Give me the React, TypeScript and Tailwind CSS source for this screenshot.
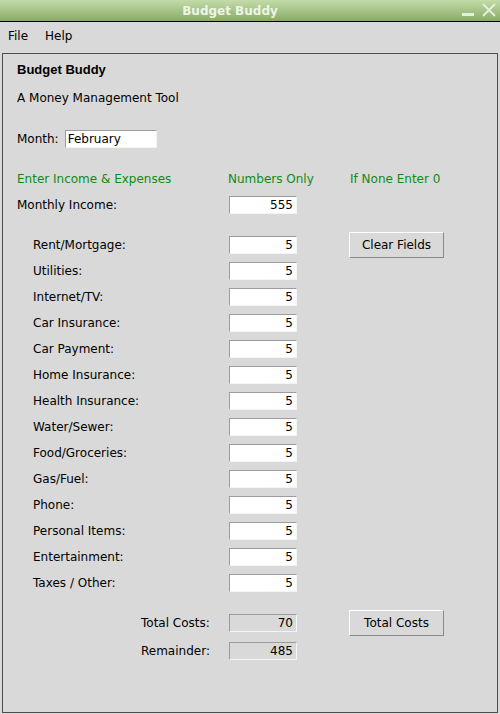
import React from "react";

const body = { fontFamily: '"DejaVu Sans", sans-serif' };

function Entry({ value, readOnly = false, w = "w-[68px]", align = "text-right" }: { value: string; readOnly?: boolean; w?: string; align?: string }) {
  return (
    <div
      className={`${w} h-[18px] border-t border-l border-[#9c9c9c] border-b border-r border-b-[#f4f4f4] border-r-[#f4f4f4] ${readOnly ? "bg-[#d9d9d9]" : "bg-white"} flex items-center ${align === "text-right" ? "justify-end pr-[3px]" : "justify-start pl-[2px]"} text-[12px] text-black leading-none`}
    >
      {value}
    </div>
  );
}

function Button({ label }: { label: string }) {
  return (
    <div className="w-[95px] h-[26px] border border-t-white border-l-white border-b-[#8a8a8a] border-r-[#8a8a8a] bg-[#d9d9d9] flex items-center justify-center text-[12px] text-black">
      {label}
    </div>
  );
}

const expenses = [
  "Rent/Mortgage:",
  "Utilities:",
  "Internet/TV:",
  "Car Insurance:",
  "Car Payment:",
  "Home Insurance:",
  "Health Insurance:",
  "Water/Sewer:",
  "Food/Groceries:",
  "Gas/Fuel:",
  "Phone:",
  "Personal Items:",
  "Entertainment:",
  "Taxes / Other:",
];

export default function App() {
  return (
    <div className="w-[500px] h-[714px] bg-[#d9d9d9] flex flex-col overflow-hidden" style={body}>
      {/* Title bar */}
      <div className="h-[22px] border-b border-black bg-gradient-to-b from-[#c4dca8] to-[#88ab68] flex items-center relative shrink-0">
        <div
          className="w-full pr-[40px] text-center text-[12px] font-bold text-[#eef5e6] leading-none"
          style={{ fontFamily: '"DejaVu Sans", sans-serif' }}
        >
          Budget Buddy
        </div>
        <div className="absolute right-[4px] top-[3px] flex items-end gap-[8px]">
          <div className="w-[12px] h-[3px] bg-[#e6efdc] mb-[1px]" />
          <svg width="14" height="14" viewBox="0 0 14 14">
            <path d="M1 1 L13 13 M13 1 L1 13" stroke="#e6efdc" strokeWidth="1.8" />
          </svg>
        </div>
      </div>

      {/* Menu bar */}
      <div className="h-[31px] shrink-0 flex items-start pt-[5px] pl-[8px] gap-[17px] text-[12px] text-black">
        <span>File</span>
        <span>Help</span>
      </div>

      {/* Panel */}
      <div className="ml-[2px] w-[496px] h-[660px] border border-[#4d4d4d] flex flex-col pl-[14px] text-[12px] text-black">
        <div className="h-[26px] mt-[3px] flex items-center">
          <span className="font-bold text-[13px]" style={{ fontFamily: '"Liberation Sans", Arial, sans-serif' }}>
            Budget Buddy
          </span>
        </div>
        <div className="h-[26px] mt-[2px] flex items-center">A Money Management Tool</div>
        <div className="h-[26px] mt-[15px] flex items-center gap-[6px]">
          <span>Month:</span>
          <Entry value="February" w="w-[92px]" align="text-left" />
        </div>
        <div className="h-[26px] mt-[14px] flex items-center text-[#108a16]">
          <span className="w-[211px]">Enter Income &amp; Expenses</span>
          <span className="w-[122px]">Numbers Only</span>
          <span>If None Enter 0</span>
        </div>
        <div className="h-[26px] flex items-center">
          <span className="w-[212px]">Monthly Income:</span>
          <Entry value="555" />
        </div>
        <div className="mt-[14px] flex flex-col">
          {expenses.map((e, i) => (
            <div key={e} className="h-[26px] flex items-center">
              <span className="w-[212px] pl-[16px]">{e}</span>
              <Entry value="5" />
              {i === 0 && (
                <div className="ml-[52px]">
                  <Button label="Clear Fields" />
                </div>
              )}
            </div>
          ))}
        </div>
        <div className="h-[26px] mt-[14px] flex items-center">
          <span className="w-[212px] pl-[124px]">Total Costs:</span>
          <Entry value="70" readOnly />
          <div className="ml-[52px] -mt-[1px]">
            <Button label="Total Costs" />
          </div>
        </div>
        <div className="h-[26px] mt-[2px] flex items-center">
          <span className="w-[212px] pl-[124px]">Remainder:</span>
          <Entry value="485" readOnly />
        </div>
      </div>
    </div>
  );
}
